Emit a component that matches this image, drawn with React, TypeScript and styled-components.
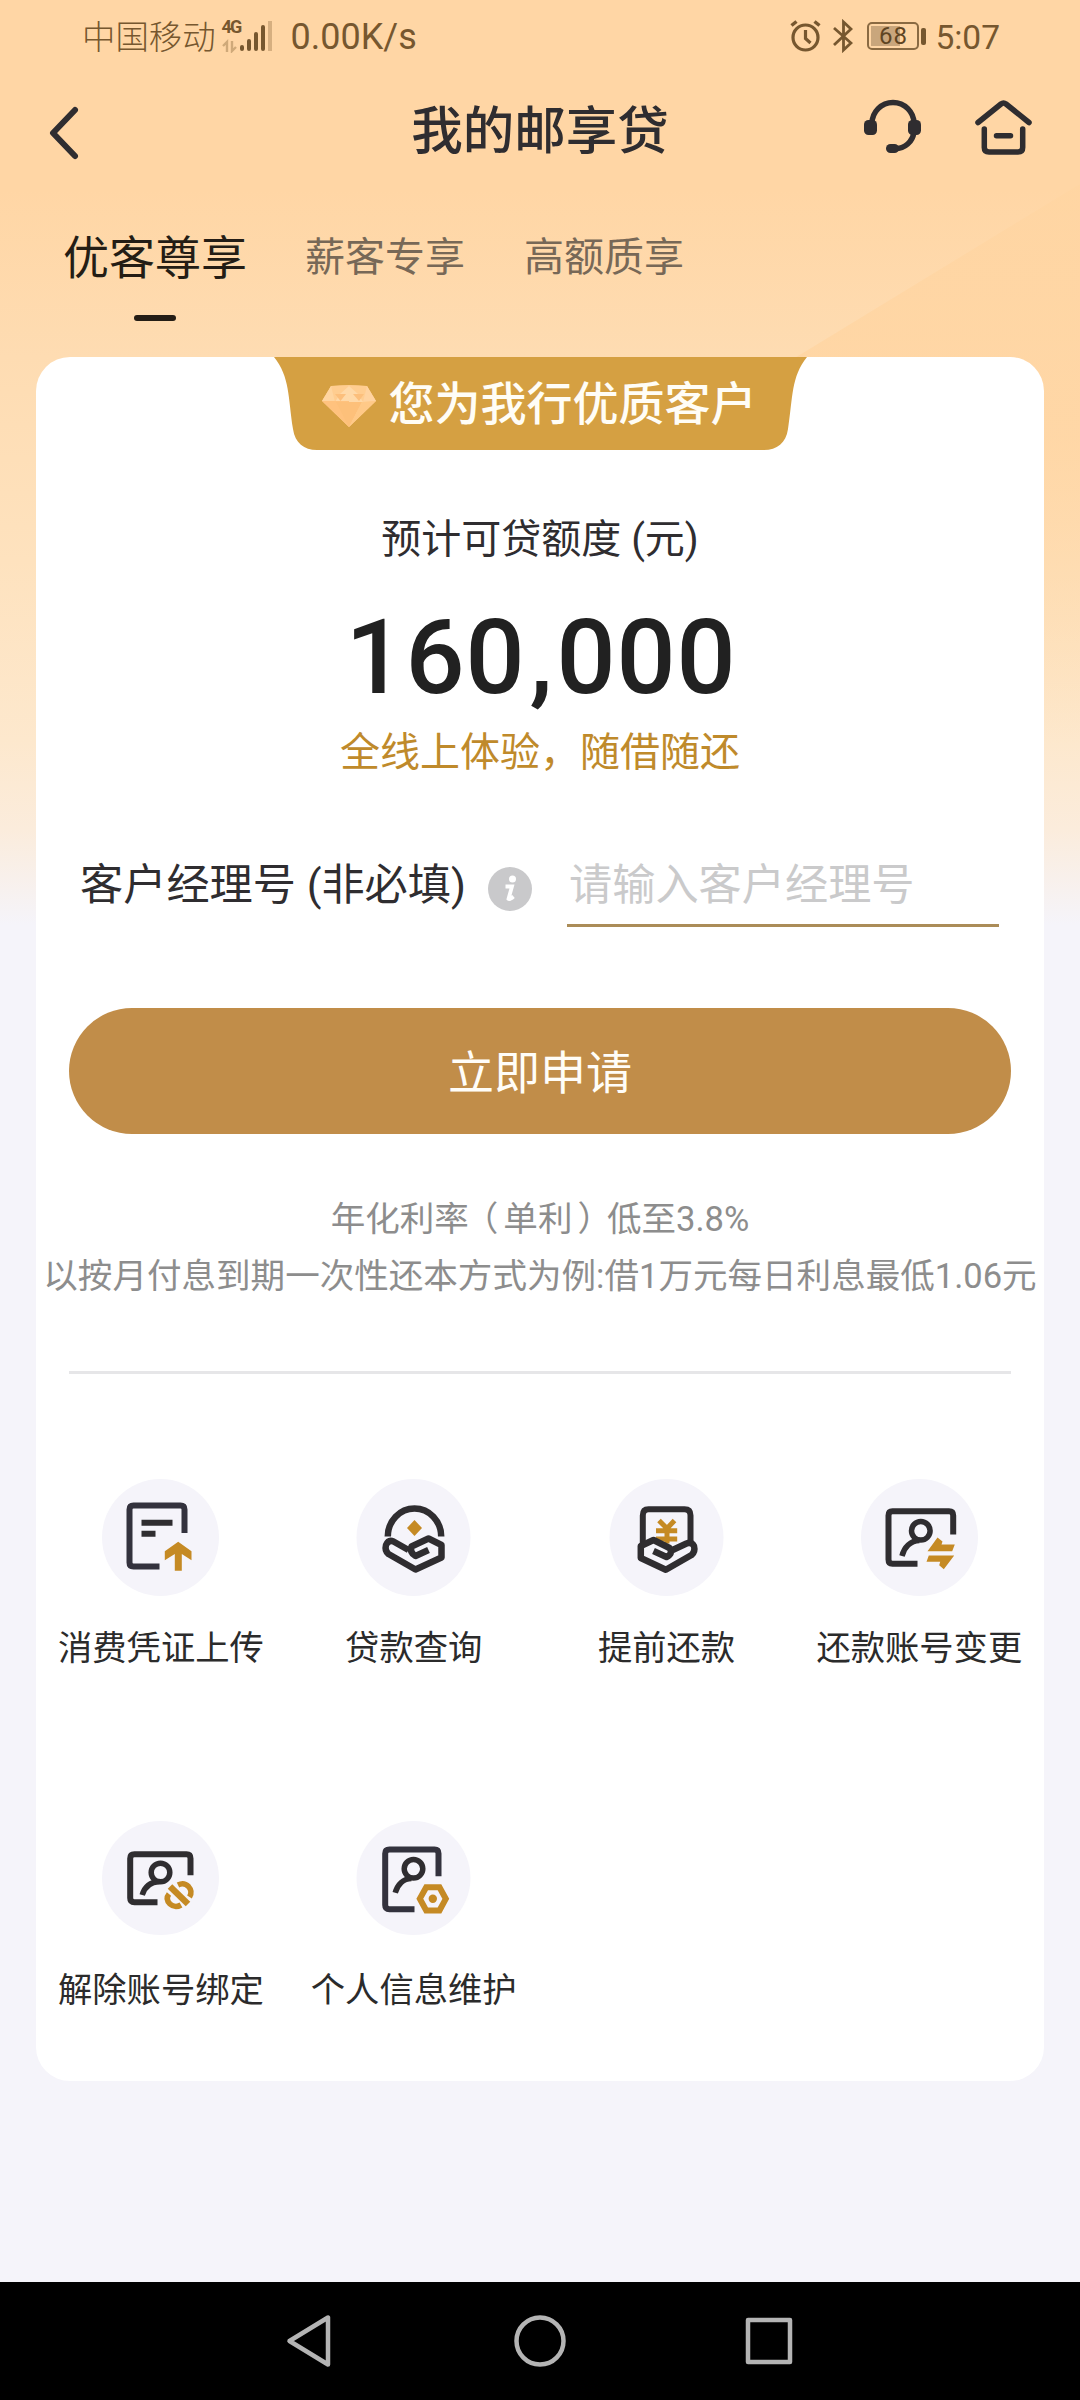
import React from "react";
import styled, { createGlobalStyle } from "styled-components";

const INK = "#2f2d30";
const GOLD = "#c58a24";

const Global = createGlobalStyle`
  *, *::before, *::after { box-sizing: border-box; }
  body { margin: 0; background: #f5f4fa; }
  input, button { font: inherit; }
`;

const Screen = styled.div`
  width: 1080px;
  height: 2400px;
  display: flex;
  flex-direction: column;
  overflow: hidden;
  position: relative;
  background: linear-gradient(180deg, #ffd6a5 0, #ffd6a5 190px, #fedcb2 357px, #fee2be 560px, #fde8cd 740px, #fbecdc 830px, #f5f4fa 925px);
  font-family: Roboto, "Noto Sans CJK SC", sans-serif;
  color: ${INK};
`;

const Beam = styled.svg`
  position: absolute;
  right: 0;
  top: 184px;
`;

const StatusBar = styled.header`
  position: relative;
  height: 72px;
  padding: 0 80px 0 82px;
  display: flex;
  justify-content: space-between;
  align-items: center;
  color: #76572f;
`;

const StatusGroup = styled.div`
  display: flex;
  align-items: center;
  height: 72px;
`;

const StatusText = styled.span<{ $size: number; $gap?: number }>`
  font-size: ${(p) => p.$size}px;
  line-height: 69px;
  padding-top: 3px;
  margin-left: ${(p) => p.$gap ?? 0}px;
  white-space: nowrap;
`;

const Carrier = styled(StatusText)`
  font-weight: 300;
`;

const Signal = styled.div`
  display: flex;
  align-items: flex-end;
  height: 40px;
  margin: 0 0 4px 6px;
`;

const Network = styled.div`
  width: 18px;
  height: 40px;
  display: flex;
  flex-direction: column;
`;

const NetworkType = styled.span`
  font-size: 18px;
  line-height: 26px;
  height: 25px;
  font-weight: 700;
  letter-spacing: -2px;
`;

const AlarmIcon = styled.svg`
  margin-right: 12px;
`;

const BatteryIcon = styled.div`
  display: flex;
  align-items: center;
  gap: 2px;
  margin-left: 14px;
`;

const BatteryShell = styled.div`
  width: 52px;
  height: 28px;
  border: 2px solid #8a6a42;
  border-radius: 5px;
  padding: 2px;
  background: linear-gradient(#c9a67c, #c9a67c) 2px 2px / 29px 20px no-repeat;
  font-size: 24px;
  line-height: 21px;
  letter-spacing: 1px;
  text-align: center;
  color: #5f4523;
`;

const BatteryTip = styled.div`
  width: 5px;
  height: 17px;
  border-radius: 2px;
  background: #76572f;
`;

const TitleBar = styled.div`
  position: relative;
  height: 116px;
  display: grid;
  grid-template-columns: 240px 1fr 240px;
  align-items: center;
`;

const IconButton = styled.button`
  border: 0;
  padding: 0;
  background: none;
  display: flex;
`;

const BackButton = styled(IconButton)`
  margin: 5px 0 0 47px;
`;

const Title = styled.h1`
  margin: 0;
  padding-top: 3px;
  font-size: 51.5px;
  font-weight: 500;
  line-height: 113px;
  text-align: center;
`;

const TitleActions = styled.div`
  display: flex;
  gap: 51px;
  padding-left: 23px;
  margin-bottom: 2px;
`;

const Tabs = styled.nav`
  position: relative;
  height: 169px;
  padding: 38px 0 0 63px;
  display: flex;
  align-items: flex-start;
`;

const Tab = styled.div<{ $active?: boolean }>`
  display: flex;
  flex-direction: column;
  align-items: center;
  height: 95px;
  margin-right: 58px;
  font-size: ${(p) => (p.$active ? 46 : 40)}px;
  line-height: 64px;
  color: ${(p) => (p.$active ? "#241d15" : "#776857")};
  & + & { margin-right: 59px; }
  &::after {
    content: "";
    display: ${(p) => (p.$active ? "block" : "none")};
    width: 42px;
    height: 6px;
    margin-top: 25px;
    border-radius: 3px;
    background: #241d15;
  }
`;

const Card = styled.main`
  position: relative;
  margin: 0 36px;
  height: 1724px;
  border-radius: 34px;
  background: #fff;
  display: flex;
  flex-direction: column;
  align-items: center;
  flex: none;
`;

const Ribbon = styled.div`
  position: relative;
  width: 533px;
  height: 93px;
  display: flex;
  align-items: center;
  padding-left: 48px;
`;

const RibbonShape = styled.svg`
  position: absolute;
  inset: 0;
`;

const Gem = styled.svg`
  position: relative;
  margin-top: 4px;
`;

const RibbonText = styled.span`
  position: relative;
  margin-left: 13px;
  padding-top: 2px;
  color: #fffdf6;
  font-size: 46px;
  font-weight: 500;
  line-height: 91px;
  white-space: nowrap;
`;

const QuotaLabel = styled.div`
  margin-top: 59.5px;
  font-size: 40px;
  line-height: 60px;
`;

const Quota = styled.div`
  margin: 28px 0 0 2px;
  font-size: 104px;
  font-weight: 500;
  line-height: 120px;
  letter-spacing: 0.9px;
  color: #212121;
`;

const QuotaComma = styled.span`
  margin: 0 3px 0 4px;
`;

const Slogan = styled.div`
  margin-top: 5px;
  font-size: 40px;
  line-height: 60px;
  color: #bf8a2b;
`;

const ManagerRow = styled.label`
  width: 100%;
  margin-top: 71.5px;
  padding: 0 45px 0 44px;
  height: 73px;
  display: flex;
  align-items: flex-start;
  font-size: 43.2px;
  line-height: 63px;
`;

const InfoIcon = styled.svg`
  margin: 13px 0 0 22px;
  flex: none;
`;

const ManagerInput = styled.input`
  width: 432px;
  margin-left: auto;
  height: 73px;
  padding: 0 0 7px 2px;
  border: 0;
  border-bottom: 3px solid #ab8c58;
  border-radius: 0;
  background: none;
  outline: none;
  &::placeholder { color: #cacacb; opacity: 1; }
`;

const ApplyButton = styled.button`
  margin-top: 81px;
  width: 942px;
  height: 126px;
  border: 0;
  border-radius: 63px;
  background: #c18d49;
  color: #fffdf8;
  font-size: 46px;
  line-height: 100px;
  padding: 4px 0 0;
  flex: none;
`;

const Notes = styled.div`
  margin-top: 57px;
  display: flex;
  flex-direction: column;
  align-items: center;
`;

const Note = styled.p`
  margin: 0;
  font-size: 34.55px;
  line-height: 57px;
  color: #8d8d8d;
  white-space: nowrap;
`;

/* Half-width bracket with its own side bearings, so that it sits nearer the middle of its cell. */
const Bracket = styled.span<{ $before: number; $after: number }>`
  font-feature-settings: "halt";
  margin: 0 ${(p) => p.$after}px 0 ${(p) => p.$before}px;
`;

const Divider = styled.hr`
  width: 942px;
  margin: 66px 0 0;
  border: 0;
  border-top: 3px solid #e6e6e8;
`;

const Services = styled.section`
  align-self: flex-start;
  margin: 105px 0 0 -1.5px;
  display: grid;
  grid-template-columns: repeat(4, 252.8px);
  grid-auto-rows: 342px;
`;

const Service = styled.div`
  display: flex;
  flex-direction: column;
  align-items: center;
`;

const ServiceName = styled.span`
  margin-top: 26px;
  font-size: 34.3px;
  line-height: 52px;
  white-space: nowrap;
  color: #2b2b2b;
`;

const NavBar = styled.footer`
  margin-top: auto;
  height: 118px;
  padding: 0 286px 0 285px;
  background: #000;
  display: flex;
  justify-content: space-between;
  align-items: center;
`;

type BadgeProps = { w?: number; h?: number; children: React.ReactNode };

/* Round badge: glyph coordinates are centred on (0,0). */
const Badge = ({ w = 117, h = 117, children }: BadgeProps) => (
  <svg width="117" height="117" viewBox="-58.5 -58.5 117 117" fill="none">
    <ellipse cy={h < 117 ? -1.5 : 0} rx={w / 2} ry={h / 2} fill="#f5f4fa" />
    {children}
  </svg>
);

const UploadGlyph = () => (
  <Badge>
    <path d="M24 -4.500V-28Q24 -32 20 -32H-27Q-31 -32 -31 -28V25Q-31 29 -27 29H-1" stroke="#33323d" strokeWidth="6" />
    <path d="M-19 -14.700H12M-19 -3.800H-5" stroke={INK} strokeWidth="6" />
    <path d="M17.700 4.300L31 13.700V22.700L21.300 16.500V33.300H14.300V16.500L4.300 22.700V13.700Z" fill={GOLD} />
  </Badge>
);

const QueryGlyph = () => (
  <Badge w={114}>
    <path d="M-25.700 -1A26.700 28 0 0 1 27.700 -1" stroke={INK} strokeWidth="6.500" />
    <path d="M1 -17.500L8.500 -9.500L1 -1.500L-6.500 -9.500Z" fill={GOLD} />
    <path d="M-5 12.500L-20 4Q-25 2 -27.500 7.500Q-29 13 -25 16.500L2 32L28 20V7.500L15 1L-2 9Q-4 15 2 18.500L15 12.500" stroke={INK} strokeWidth="6.500" strokeLinejoin="round" />
  </Badge>
);

const RepayGlyph = () => (
  <Badge w={114}>
    <path d="M-23.700 8V-22Q-23.700 -28.300 -18 -28.300H18Q24 -28.300 24 -22V8" stroke={INK} strokeWidth="6" />
    <path d="M-7.500 -17L0.500 -9L8 -17M0.500 -10V6M-10.500 -6.700H10.700M-10.500 1.500H10.700" stroke={GOLD} strokeWidth="5" />
    <path d="M4 13.500L20 6Q25 4 27.500 8.500Q29 14 25 17.500L-0.700 32.200L-25.700 20.500V8.500L-13 2.500L3 10.500Q7 16 0 19.500L-13 13.500" stroke={INK} strokeWidth="6.500" strokeLinejoin="round" />
  </Badge>
);

const ChangeGlyph = () => (
  <Badge>
    <path d="M33.700 -3V-22Q33.700 -26.300 29.500 -26.300H-27Q-31 -26.300 -31 -22V22Q-31 26.300 -27 26.300H-2" stroke={INK} strokeWidth="6" />
    <circle cx="1.300" cy="-6.700" r="9.300" stroke={INK} strokeWidth="5.500" />
    <path d="M-17.500 18.500C-15.500 10 -9 3 0 3" stroke={INK} strokeWidth="5.500" />
    <path d="M8 13.700L18 0L23 4L22 7H35.300L32.700 13.700ZM9.300 18H34.700L24.300 31.700L19.700 27.700L20.700 24.300H7Z" fill={GOLD} />
  </Badge>
);

const UnbindGlyph = () => (
  <Badge h={114}>
    <path d="M30 -4.300V-21Q30 -25.300 26 -25.300H-26Q-30.300 -25.300 -30.300 -21V18.500Q-30.300 22.700 -26 22.700H-3" stroke={INK} strokeWidth="6" />
    <circle cx="0" cy="-7" r="9.300" stroke={INK} strokeWidth="5.500" />
    <path d="M-18.300 15.500C-16 7.500 -10 2.500 -1 2" stroke={INK} strokeWidth="5.500" />
    <path d="M9.500 7L27.500 24.500" stroke={GOLD} strokeWidth="6.500" />
    <path d="M17.500 5.500Q23.500 2.500 28 7Q32.500 12 29 17.500M8.500 14.500Q4.500 19.500 9.500 24.500Q14.500 29 20.500 25.500" stroke={GOLD} strokeWidth="5.500" />
  </Badge>
);

const ProfileGlyph = () => (
  <Badge w={114} h={114}>
    <path d="M25 -3.300V-26Q25 -30 21 -30H-24Q-28.300 -30 -28.300 -26V25.500Q-28.300 29.700 -24 29.700H1" stroke="#33323d" strokeWidth="6" />
    <circle cx="0" cy="-10.700" r="9.300" stroke={INK} strokeWidth="5.500" />
    <path d="M-18.300 13.300C-16 5 -10 -1 -2 -1" stroke={INK} strokeWidth="5.500" />
    <path d="M12.700 7.700H26L32.300 19.300L26 31H12.700L6.300 19.300Z" stroke={GOLD} strokeWidth="6" />
    <circle cx="19.300" cy="19.300" r="4.200" fill={GOLD} />
  </Badge>
);

const services = [
  { name: "消费凭证上传", Glyph: UploadGlyph },
  { name: "贷款查询", Glyph: QueryGlyph },
  { name: "提前还款", Glyph: RepayGlyph },
  { name: "还款账号变更", Glyph: ChangeGlyph },
  { name: "解除账号绑定", Glyph: UnbindGlyph },
  { name: "个人信息维护", Glyph: ProfileGlyph },
];

export default function App() {
  return (
    <>
      <Global />
      <Screen>
        <Beam width="300" height="560" viewBox="0 0 300 560">
          <defs>
            <linearGradient id="beam" x1="0" y1="0" x2="0" y2="1">
              <stop offset="0" stopColor="#ffd5a2" stopOpacity="0.8" />
              <stop offset="0.450" stopColor="#ffd5a2" stopOpacity="0.8" />
              <stop offset="1" stopColor="#ffd5a2" stopOpacity="0" />
            </linearGradient>
          </defs>
          <path d="M300 0L0 183V560H300Z" fill="url(#beam)" />
        </Beam>
        <StatusBar>
          <StatusGroup>
            <Carrier $size={33.4}>中国移动</Carrier>
            <Signal>
              <Network>
                <NetworkType>4G</NetworkType>
                <svg width="18" height="14" viewBox="0 0 18 14">
                  <path d="M5 13V3L1 7M10 2V12L14 8" stroke="#cfa979" strokeWidth="2.400" fill="none" />
                </svg>
              </Network>
              <svg width="32" height="34" viewBox="17 0 32 34">
                <path d="M19 29V27M26 29V21M33 29V14M40 29V7" stroke="#76572f" strokeWidth="4" strokeLinecap="round" />
                <path d="M47 31V1" stroke="#d6af80" strokeWidth="4" />
              </svg>
            </Signal>
            <StatusText $size={36} $gap={19}>0.00K/s</StatusText>
          </StatusGroup>
          <StatusGroup>
            <AlarmIcon width="31" height="34" viewBox="0 0 31 34" fill="none" stroke="#76572f">
              <circle cx="15.500" cy="18.500" r="12.500" strokeWidth="3.200" />
              <path d="M15.500 11V19.500L20.500 24" strokeWidth="3.200" />
              <path d="M1.500 6.500L6.500 2.500M29.500 6.500L24.500 2.500" strokeWidth="3.500" />
            </AlarmIcon>
            <svg width="20" height="34" viewBox="0 0 20 34" fill="none" stroke="#76572f" strokeWidth="2.800">
              <path d="M1 9L18 24L10.500 31V3L18 10L1 26" />
            </svg>
            <BatteryIcon>
              <BatteryShell>68</BatteryShell>
              <BatteryTip />
            </BatteryIcon>
            <StatusText $size={33.5} $gap={9}>5:07</StatusText>
          </StatusGroup>
        </StatusBar>

        <TitleBar>
          <BackButton aria-label="返回">
            <svg width="34" height="56" viewBox="0 0 34 56" fill="none" stroke={INK} strokeWidth="6" strokeLinecap="round" strokeLinejoin="round">
              <path d="M28 5L6 28L28 51" />
            </svg>
          </BackButton>
          <Title>我的邮享贷</Title>
          <TitleActions>
            <IconButton aria-label="客服">
              <svg width="60" height="60" viewBox="0 0 60 60" fill="none" stroke={INK}>
                <path d="M9 24.500A21 21 0 0 1 51 24.500M51 33C49.500 43 42 49.500 32 50" strokeWidth="5.500" />
                <rect x="1" y="21" width="13" height="15" rx="4.500" fill={INK} stroke="none" />
                <rect x="45" y="21" width="13" height="15" rx="4.500" fill={INK} stroke="none" />
                <rect x="23" y="45" width="13" height="9" rx="4.500" fill={INK} stroke="none" />
              </svg>
            </IconButton>
            <IconButton aria-label="首页">
              <svg width="60" height="60" viewBox="0 0 60 60" fill="none" stroke={INK} strokeWidth="5.500" strokeLinecap="round" strokeLinejoin="round">
                <path d="M4 23.500L27 5Q29.500 3 32 5L55 23.500" />
                <path d="M10.300 30V48.500Q10.300 53 15 53H44Q48.700 53 48.700 48.500V30M22.500 36.700H36.500" />
              </svg>
            </IconButton>
          </TitleActions>
        </TitleBar>

        <Tabs>
          <Tab $active>优客尊享</Tab>
          <Tab>薪客专享</Tab>
          <Tab>高额质享</Tab>
        </Tabs>

        <Card>
          <Ribbon>
            <RibbonShape width="533" height="93" viewBox="0 0 533 93">
              <path d="M0 0C16 20 14 40 19 72C21 86 30 93 43 93H490C503 93 512 86 514 72C519 40 517 20 533 0Z" fill="#d5a042" />
            </RibbonShape>
            <Gem width="54" height="42" viewBox="0 0 54 42">
              <path d="M9 1Q27 -1 45 1L54 16L27 42L0 16Z" fill="#ffcd90" />
              <path d="M9 1L0 16L13 17Z" fill="#ffd5a0" />
              <path d="M27 1L36 9L41 17H13L18 9Z" fill="#ffd9a8" />
              <path d="M13 9H24L18.500 16ZM31 9H42L37 16Z" fill="#fcbf7c" />
              <path d="M45 1L54 16L41 17Z" fill="#ffd3a0" />
              <path d="M0 16H27V42Z" fill="#ffc27e" />
              <path d="M14 17H40L27 42Z" fill="#fdc07a" />
              <path d="M40 17L54 16L27 42Z" fill="#ffc988" />
            </Gem>
            <RibbonText>您为我行优质客户</RibbonText>
          </Ribbon>

          <QuotaLabel>预计可贷额度 (元)</QuotaLabel>
          <Quota>160<QuotaComma>,</QuotaComma>000</Quota>
          <Slogan>全线上体验，随借随还</Slogan>

          <ManagerRow>
            客户经理号 (非必填)
            <InfoIcon width="44" height="44" viewBox="0 0 44 44">
              <circle cx="22" cy="22" r="22" fill="#c9c9cb" />
              <circle cx="24.500" cy="12" r="3.500" fill="#fff" />
              <path d="M17.500 19.500H24L20.500 32Q21.500 33 25.500 29.500" fill="none" stroke="#fff" strokeWidth="3.800" />
            </InfoIcon>
            <ManagerInput placeholder="请输入客户经理号" />
          </ManagerRow>

          <ApplyButton>立即申请</ApplyButton>

          <Notes>
            <Note>
              年化利率<Bracket $before={12.2} $after={5}>（</Bracket>单利<Bracket $before={5} $after={12.2}>）</Bracket>低至3.8%
            </Note>
            <Note>以按月付息到期一次性还本方式为例:借1万元每日利息最低1.06元</Note>
          </Notes>

          <Divider />

          <Services>
            {services.map(({ name, Glyph }) => (
              <Service key={name}>
                <Glyph />
                <ServiceName>{name}</ServiceName>
              </Service>
            ))}
          </Services>
        </Card>

        <NavBar>
          <svg width="50" height="56" viewBox="0 0 50 56" fill="none" stroke="#b4b4b4" strokeWidth="4.500" strokeLinejoin="round">
            <path d="M43 4.500V51.500L4.500 28Z" />
          </svg>
          <svg width="56" height="56" viewBox="0 0 56 56" fill="none" stroke="#b4b4b4" strokeWidth="4.500">
            <circle cx="28" cy="28" r="23.500" />
          </svg>
          <svg width="50" height="50" viewBox="0 0 50 50" fill="none" stroke="#b4b4b4" strokeWidth="4.500" strokeLinejoin="round">
            <rect x="4" y="4" width="42" height="42" />
          </svg>
        </NavBar>
      </Screen>
    </>
  );
}
